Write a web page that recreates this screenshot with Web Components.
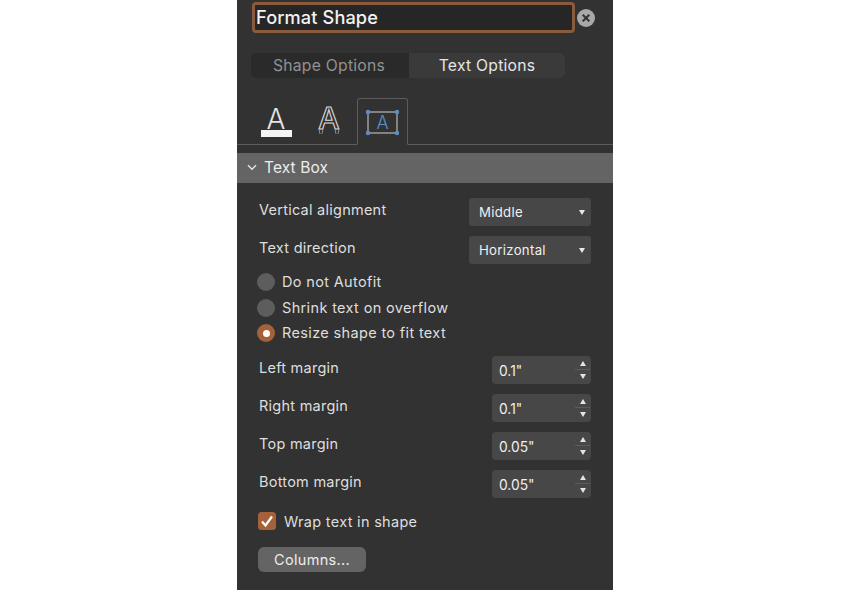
<!DOCTYPE html>
<html>
<head>
<meta charset="utf-8">
<style>
    html, body { margin: 0; background: #fff; }
    body { height: 590px; overflow: hidden; padding-left: 237px; font-family: Inter, "Liberation Sans", sans-serif; }
</style>
</head>
<body>
<format-panel>
    <panel-title>Format Shape</panel-title>
    <option-tabs></option-tabs>
    <icon-tabs></icon-tabs>
    <section-band>Text Box</section-band>
    <select-row label="Vertical alignment" value="Middle"></select-row>
    <select-row label="Text direction" value="Horizontal" style="margin-top:10px"></select-row>
    <radio-group style="margin-top:9px">
        <radio-item>Do not Autofit</radio-item>
        <radio-item>Shrink text on overflow</radio-item>
        <radio-item selected>Resize shape to fit text</radio-item>
    </radio-group>
    <spin-row label="Left margin" value="0.1&quot;" style="margin-top:14px"></spin-row>
    <spin-row label="Right margin" value="0.1&quot;"></spin-row>
    <spin-row label="Top margin" value="0.05&quot;"></spin-row>
    <spin-row label="Bottom margin" value="0.05&quot;"></spin-row>
    <check-item>Wrap text in shape</check-item>
    <push-button>Columns...</push-button>
</format-panel>

<script>
const define = (name, css, html) => {
    customElements.define(name, class extends HTMLElement {
        connectedCallback() {
            if (this.shadowRoot) return;
            this.attachShadow({ mode: "open" });
            const attr = (k) => (this.getAttribute(k) || "").replace(/"/g, "&quot;");
            this.shadowRoot.innerHTML = `<style>${css}</style>` + (typeof html === "function" ? html(attr) : html);
        }
    });
};

define("format-panel", `
    :host { display: flex; flex-direction: column; box-sizing: border-box; width: 376px; height: 590px; background: #323232; color: #dedede; font-size: 14.5px; padding-top: 2px; overflow: hidden; }
`, `<slot></slot>`);

define("panel-title", `
    :host { display: flex; align-items: center; gap: 2px; padding-left: 15px; height: 31px; }
    .box { box-sizing: border-box; width: 323px; height: 31px; border: 3px solid #8a5a3c; border-radius: 4px; background: #262626; color: #f2f2f2; font-size: 18.2px; font-weight: 500; line-height: 24px; padding-left: 1px; letter-spacing: .1px; }
    svg { width: 18px; height: 18px; }
`, `<div class="box"><slot></slot></div>
    <svg viewBox="0 0 18 18"><circle cx="9" cy="9" r="9" fill="#a8a8a8"/><path d="M5.7 5.7l6.6 6.6M12.3 5.7l-6.6 6.6" stroke="#333" stroke-width="2" fill="none"/></svg>`);

define("option-tabs", `
    :host { display: flex; box-sizing: border-box; width: 314px; height: 25px; margin: 20px 0 0 14px; border-radius: 5px; background: #2a2a2a; font-size: 15.7px; line-height: 25px; text-align: center; letter-spacing: .25px; overflow: hidden; }
    div { flex: none; box-sizing: border-box; }
    .off { width: 158px; padding-right: 2px; color: #929292; }
    .on { width: 156px; color: #e6e6e6; background: #3a3a3a; }
`, `<div class="off">Shape Options</div><div class="on">Text Options</div>`);

define("icon-tabs", `
    :host { display: flex; align-items: flex-end; box-sizing: border-box; height: 47px; margin-top: 20px; border-bottom: 1px solid #5c5c5c; padding-left: 14px; }
    svg { display: block; }
    .i1 { width: 50px; height: 46px; }
    .i2 { width: 56px; height: 46px; }
    .cur { box-sizing: border-box; width: 51px; height: 47px; margin: 0 0 -1px 0; border: 1px solid #5c5c5c; border-bottom: 1px solid #323232; border-radius: 3px 3px 0 0; }
    .cur svg { width: 49px; height: 45px; }
    text { font-family: Inter, "Liberation Sans", sans-serif; font-weight: 300; }
`, `<svg class="i1" viewBox="0 0 50 46">
        <text x="25" y="31" text-anchor="middle" font-size="28" fill="#e6e6e6">A</text>
        <rect x="10" y="32" width="31" height="7" fill="#f4f4f4"/>
    </svg>
    <svg class="i2" viewBox="0 0 56 46">
        <text x="28" y="31" text-anchor="middle" font-size="30" fill="#323232" stroke="#d8d8d8" stroke-width="1.1" style="font-weight:500">A</text>
        <path d="M18 31l1 5M22 31l-1 5M34 31l1 5M38 31l-1 5" stroke="#8c8c8c" stroke-width="1" fill="none"/>
    </svg>
    <div class="cur"><svg viewBox="0 0 49 45">
        <rect x="10" y="13" width="29" height="21" fill="none" stroke="#b8b8b8" stroke-width="1.2"/>
        <text x="24.5" y="30" text-anchor="middle" font-size="18" fill="#5b8fc9">A</text>
        <g fill="#5b8fc9"><circle cx="10" cy="13" r="2.2"/><circle cx="39" cy="13" r="2.2"/><circle cx="10" cy="34" r="2.2"/><circle cx="39" cy="34" r="2.2"/></g>
    </svg></div>`);

define("section-band", `
    :host { display: flex; align-items: center; box-sizing: border-box; height: 30px; margin: 8px 0 15px; background: #646464; color: #ececec; font-size: 15.5px; padding: 0 0 2px 10px; gap: 7px; letter-spacing: .1px; }
    svg { width: 10px; height: 7px; }
`, `<svg viewBox="0 0 10 7"><path d="M1 1.2l4 4 4-4" fill="none" stroke="#e6e6e6" stroke-width="1.4"/></svg><slot></slot>`);

define("select-row", `
    :host { display: flex; align-items: center; justify-content: space-between; height: 28px; padding: 0 22px; }
    .lab { position: relative; top: -3px; letter-spacing: .25px; }
    .sel { box-sizing: border-box; display: flex; align-items: center; justify-content: space-between; width: 122px; height: 28px; padding: 0 6px 0 10px; background: #474747; border-radius: 3px; color: #f0f0f0; font-size: 13.2px; letter-spacing: .3px; }
    i { width: 0; height: 0; border: 3px solid transparent; border-top: 5px solid #e8e8e8; border-bottom: 0; }
`, (a) => `<span class="lab">${a("label")}</span><div class="sel"><span>${a("value")}</span><i></i></div>`);

define("radio-group", `
    :host { display: flex; flex-direction: column; gap: 7.5px; padding-left: 20px; }
`, `<slot></slot>`);

define("radio-item", `
    :host { display: flex; align-items: center; gap: 7px; height: 18px; letter-spacing: .35px; }
    .r { box-sizing: border-box; width: 18px; height: 18px; border-radius: 50%; background: #5d5d5d; display: flex; align-items: center; justify-content: center; }
    :host([selected]) .r { background: #a5623a; }
    :host([selected]) .r::after { content: ""; width: 7px; height: 7px; border-radius: 50%; background: #fff; }
`, `<div class="r"></div><span style="margin-top:-1px"><slot></slot></span>`);

define("spin-row", `
    :host { display: flex; align-items: center; justify-content: space-between; height: 28px; margin-bottom: 10px; padding: 0 22px; }
    .lab { position: relative; top: -3px; letter-spacing: .25px; }
    .spin { box-sizing: border-box; display: flex; align-items: center; justify-content: space-between; width: 99px; height: 28px; padding-left: 7px; background: #474747; border-radius: 4px; color: #f0f0f0; font-size: 13.8px; }
    .val { padding-top: 2px; }
    .btn { display: flex; flex-direction: column; align-items: center; justify-content: center; gap: 8px; width: 15px; height: 28px; margin-right: 1px; position: relative; }
    .btn::before { content: ""; position: absolute; top: 13px; left: 0; right: 0; height: 1px; background: #5c5c5c; }
    i { width: 0; height: 0; border: 3.5px solid transparent; }
    .u { border-bottom: 5px solid #e4e4e4; border-top: 0; }
    .d { border-top: 5px solid #e4e4e4; border-bottom: 0; }
`, (a) => `<span class="lab">${a("label")}</span><div class="spin"><span class="val">${a("value")}</span><div class="btn"><i class="u"></i><i class="d"></i></div></div>`);

define("check-item", `
    :host { display: flex; align-items: center; gap: 8px; height: 18px; margin: 4px 0 0 21px; letter-spacing: .3px; }
    svg { width: 18px; height: 18px; }
`, `<svg viewBox="0 0 18 18"><rect width="18" height="18" rx="3.5" fill="#a5623a"/><path d="M4 9.5l3.5 4L14 4.5" fill="none" stroke="#fff" stroke-width="2.2"/></svg><slot></slot>`);

define("push-button", `
    :host { display: flex; align-items: center; justify-content: center; box-sizing: border-box; width: 108px; height: 25px; margin: 17px 0 0 21px; padding-bottom: 1px; background: #646464; border-radius: 6px; color: #ececec; letter-spacing: .3px; }
`, `<slot></slot>`);
</script>
</body>
</html>
